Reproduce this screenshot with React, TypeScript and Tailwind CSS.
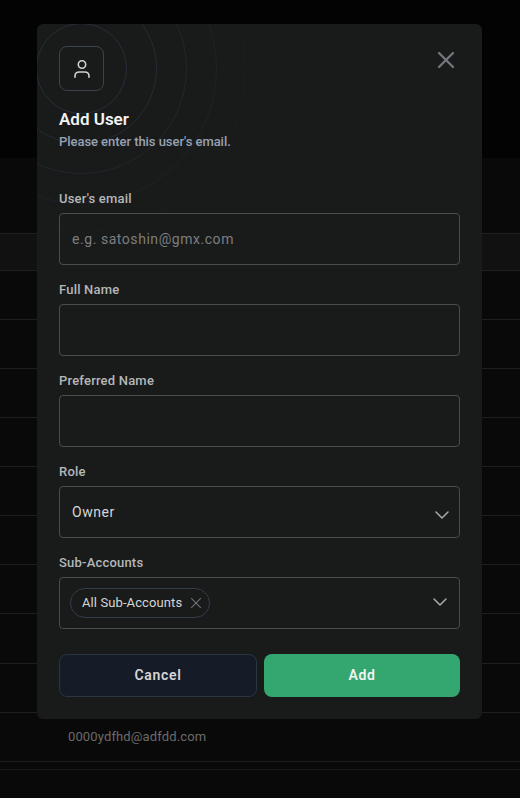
import { ChevronDown, X } from 'lucide-react';

const rows = [37, 49, 49, 49, 49, 49, 49, 49, 50, 49];

function Rings() {
  const rings = [
    { r: 45, o: 0.85 },
    { r: 75, o: 0.7 },
    { r: 105, o: 0.5 },
    { r: 135, o: 0.32 },
    { r: 164, o: 0.16 },
  ];
  return (
    <svg className="absolute left-0 top-0 pointer-events-none" width="300" height="240" viewBox="0 0 300 240" fill="none">
      {rings.map(ring => (
        <circle key={ring.r} cx="44.5" cy="44.5" r={ring.r} stroke="#2a3342" strokeOpacity={ring.o} />
      ))}
    </svg>
  );
}

function Label({ children }: { children: string }) {
  return <label className="block h-5 mb-[5px] text-[13px] leading-[21px] font-medium tracking-[0.2px] text-[#b5b7b9]">{children}</label>;
}

function TextField({ label, placeholder }: { label: string; placeholder?: string }) {
  return (
    <div>
      <Label>{label}</Label>
      <input
        placeholder={placeholder}
        className="block w-full h-[52px] px-3 bg-transparent rounded-[4px] border border-[#4a4c4d] text-[14px] tracking-[0.55px] text-[#d5d6d7] placeholder:text-[#7c7e80] outline-none"
      />
    </div>
  );
}

export default function App() {
  return (
    <div className="relative w-[520px] h-[798px] overflow-hidden bg-[#030303]" style={{ fontFamily: 'Roboto, sans-serif' }}>
      {/* Dimmed table behind the dialog */}
      <div className="pt-[158px] h-full bg-[#030303]">
        <div className="h-full bg-[#090909]">
          <div className="h-[75px]" />
          {rows.map((height, index) => (
            <div
              key={index}
              className={`border-t border-[#1e1e1e] ${index === 0 ? 'bg-[#111111]' : ''}`}
              style={{ height }}
            />
          ))}
          <div className="h-[49px] border-t border-[#1e1e1e] pl-[68px] pt-[14px] text-[13px] leading-5 tracking-[0.13px] text-[#6b6b6b]">
            0000ydfhd@adfdd.com
          </div>
          <div className="h-[8px] border-t border-[#1e1e1e]" />
          <div className="border-t border-[#1a1a1a]" />
        </div>
      </div>

      {/* Dialog */}
      <div className="absolute left-[37px] top-[24px] w-[445px] h-[695px] overflow-hidden rounded-[6px] bg-[#191b1b] p-[22px]">
        <Rings />
        <button className="absolute right-[22px] top-[22px] text-[#74757d]">
          <X className="w-7 h-7" strokeWidth={2} />
        </button>

        <div className="relative">
          <div className="flex items-center justify-center w-[45px] h-[45px] rounded-[8px] border border-[#3a4350] text-[#d0d1d2]">
            <svg width="18" height="20" viewBox="0 0 18 20" fill="none" stroke="currentColor" strokeWidth="1.6" strokeLinecap="round">
              <circle cx="9" cy="5.5" r="3.7" />
              <path d="M2 18.2v-1.2c0-2.6 2-4 4.5-4h5c2.5 0 4.5 1.4 4.5 4v1.2" />
            </svg>
          </div>
          <h2 className="mt-4 text-[17px] leading-6 font-semibold text-[#f2f2f2]">Add User</h2>
          <p className="mt-px text-[13px] leading-5 font-medium tracking-[-0.05px] text-[#98a2b3]">Please enter this user's email.</p>

          <div className="mt-9 flex flex-col gap-[14px]">
            <TextField label="User's email" placeholder="e.g. satoshin@gmx.com" />
            <TextField label="Full Name" />
            <TextField label="Preferred Name" />

            <div>
              <Label>Role</Label>
              <div className="flex items-center justify-between h-[52px] pl-3 pr-[5px] rounded-[4px] border border-[#4a4c4d] text-[14px] tracking-[0.55px] text-[#d5d6d7]">
                <span>Owner</span>
                <ChevronDown className="w-6 h-6 mt-[6px] text-[#a8a9aa]" strokeWidth={1.5} />
              </div>
            </div>

            <div>
              <Label>Sub-Accounts</Label>
              <div className="flex items-center justify-between h-[52px] pl-[10px] pr-[7px] rounded-[4px] border border-[#4a4c4d]">
                <div className="flex items-center gap-[5px] h-[30px] pl-[11px] pr-1 rounded-full border border-[#323c4a] text-[13px] tracking-[0.1px] text-[#d5d6d7]">
                  <span>All Sub-Accounts</span>
                  <X className="w-[18px] h-[18px] text-[#7d8086]" strokeWidth={1.4} />
                </div>
                <ChevronDown className="w-6 h-6 -mt-[2px] text-[#a8a9aa]" strokeWidth={1.5} />
              </div>
            </div>
          </div>

          <div className="mt-[25px] flex gap-[7px]">
            <button className="flex-1 h-[43px] rounded-[8px] border border-[#2c3542] bg-[#151c27] text-[14px] font-semibold tracking-[0.7px] text-[#d5d6d7]">
              Cancel
            </button>
            <button className="flex-1 h-[43px] rounded-[8px] bg-[#34a770] text-[14px] font-semibold tracking-[0.7px] text-[#f0f5f2]">
              Add
            </button>
          </div>
        </div>
      </div>
    </div>
  );
}
